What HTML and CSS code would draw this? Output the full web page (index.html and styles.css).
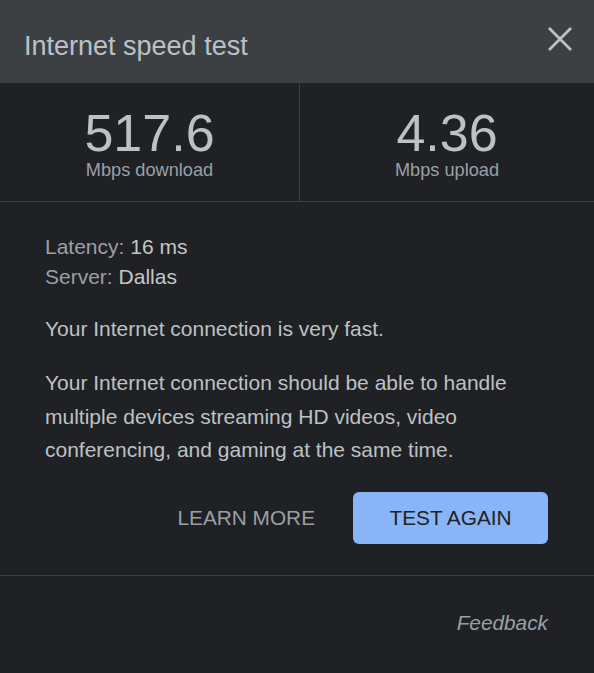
FILE: index.html
```html
<!DOCTYPE html>
<html lang="en">
<head>
<meta charset="utf-8">
<title>Internet speed test</title>
<link rel="stylesheet" href="styles.css">
</head>
<body>
<div class="card">
  <div class="header">
    <h1 class="title">Internet speed test</h1>
    <button class="close" aria-label="Close">
      <svg width="24" height="24" viewBox="0 0 24 24"><path d="M1 1 L23 23 M23 1 L1 23" stroke="#bdc1c6" stroke-width="2.8" fill="none"/></svg>
    </button>
  </div>
  <div class="stats">
    <div class="stat">
      <div class="num">517.6</div>
      <div class="cap">Mbps download</div>
    </div>
    <div class="stat">
      <div class="num">4.36</div>
      <div class="cap">Mbps upload</div>
    </div>
  </div>
  <div class="body">
    <div class="meta">
      <div><span class="label">Latency:</span> <span class="val">16 ms</span></div>
      <div><span class="label">Server:</span> <span class="val">Dallas</span></div>
    </div>
    <p class="verdict">Your Internet connection is very fast.</p>
    <p class="desc">Your Internet connection should be able to handle multiple devices streaming HD videos, video conferencing, and gaming at the same time.</p>
    <div class="actions">
      <button class="learn">LEARN MORE</button>
      <button class="again">TEST AGAIN</button>
    </div>
  </div>
  <div class="footer">
    <span class="feedback">Feedback</span>
  </div>
</div>
</body>
</html>
```
FILE: styles.css
```css
* { box-sizing: border-box; }
html, body {
  margin: 0;
  padding: 0;
  background: #202124;
}
body {
  font-family: "Liberation Sans", Arial, sans-serif;
  color: #bdc1c6;
  width: 594px;
  height: 673px;
  overflow: hidden;
}
.card {
  display: flex;
  flex-direction: column;
  height: 673px;
}
.header {
  height: 83px;
  background: #3c4043;
  display: flex;
  align-items: center;
  justify-content: space-between;
  padding: 9px 22px 0 24px;
}
.title {
  margin: 0;
  font-weight: normal;
  font-size: 27px;
  line-height: 32px;
  color: #bdc1c6;
}
.close {
  background: none;
  border: 0;
  padding: 0;
  width: 24px;
  height: 24px;
  margin-top: -15px;
  display: flex;
}
.stats {
  display: grid;
  grid-template-columns: 300px 1fr;
  height: 119px;
  border-bottom: 1px solid #3c4043;
}
.stat {
  display: flex;
  flex-direction: column;
  align-items: center;
  padding-top: 24px;
}
.stat:first-child {
  border-right: 1px solid #3c4043;
}
.num {
  font-size: 52px;
  line-height: 52px;
  color: #bdc1c6;
}
.cap {
  font-size: 18.2px;
  line-height: 22px;
  color: #9aa0a6;
  margin-top: 0;
}
.body {
  padding: 30px 46px 0 45px;
  font-size: 21px;
}
.meta {
  line-height: 30px;
}
.label { color: #9aa0a6; }
.val { color: #c4c7c5; }
.verdict {
  margin: 20px 0 0;
  line-height: 34px;
}
.desc {
  margin: 20px 0 0;
  line-height: 33.6px;
}
.actions {
  display: flex;
  justify-content: flex-end;
  align-items: center;
  gap: 38px;
  margin-top: 25px;
}
.learn {
  background: none;
  border: 0;
  padding: 0;
  font-family: inherit;
  font-size: 20.8px;
  color: #9aa0a6;
}
.again {
  width: 195px;
  height: 52px;
  border: 0;
  border-radius: 6px;
  background: #8ab4f8;
  color: #202124;
  font-family: inherit;
  font-size: 20.8px;
}
.footer {
  margin-top: 31px;
  border-top: 1px solid #3c4043;
  display: flex;
  justify-content: flex-end;
  padding: 34px 46px 0 0;
}
.feedback {
  font-style: italic;
  font-size: 20.8px;
  line-height: 26px;
  color: #9aa0a6;
}
```
